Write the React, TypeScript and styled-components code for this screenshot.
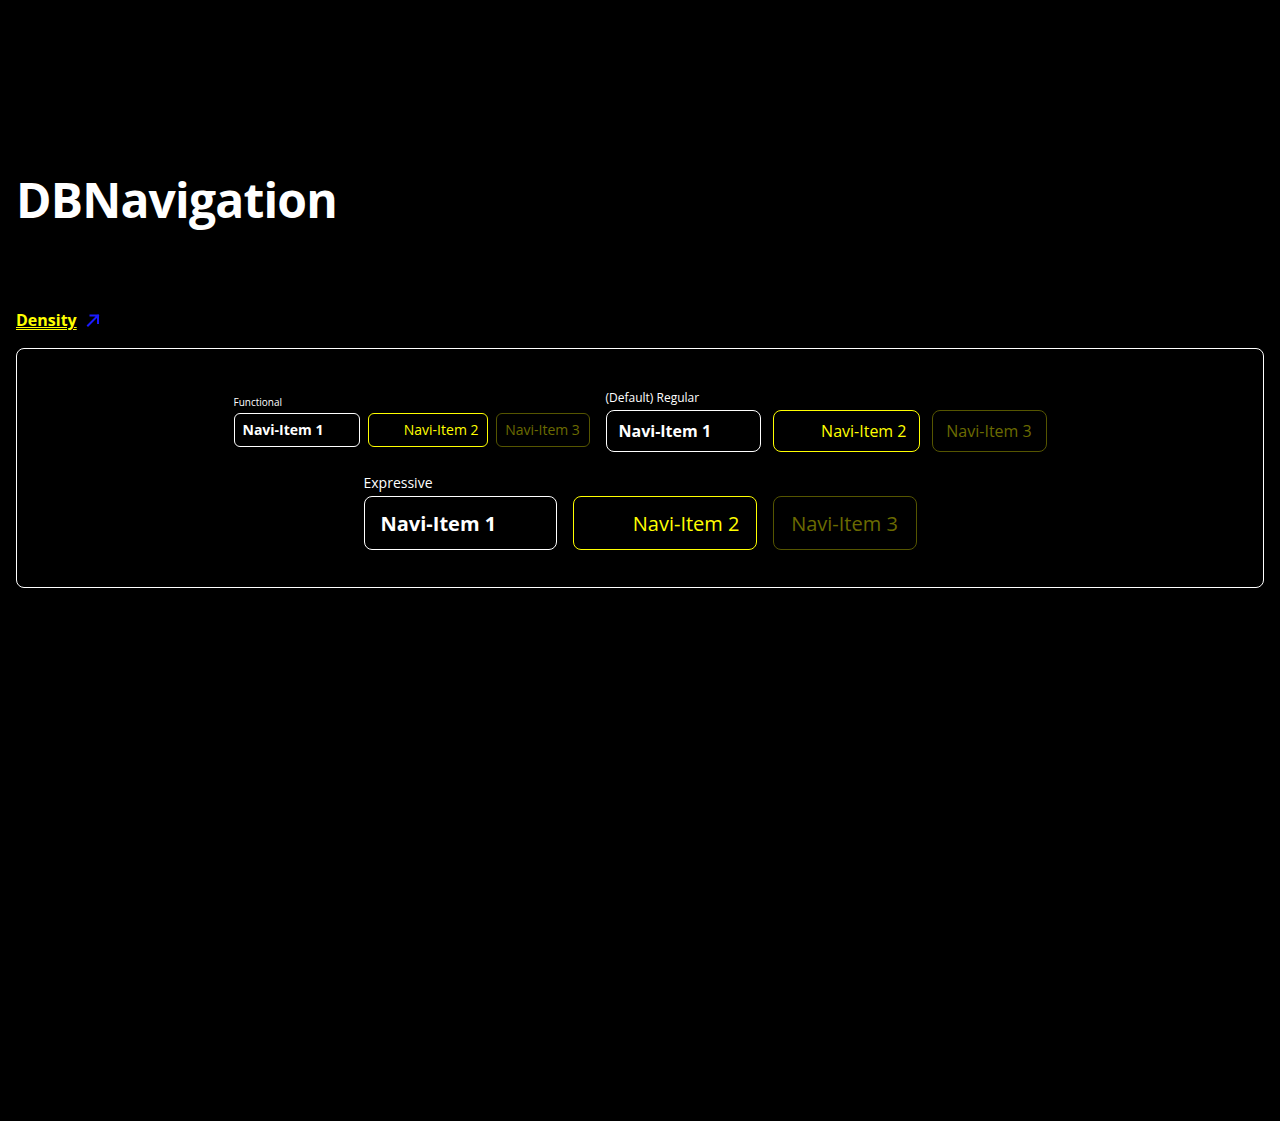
import React from "react";
import styled, { createGlobalStyle } from "styled-components";

type Density = "functional" | "regular" | "expressive";
type Tone = "active" | "current" | "muted";

const GlobalStyle = createGlobalStyle`
  html, body {
    margin: 0;
    padding: 0;
    background: #000;
    color: #fff;
    font-family: "Open Sans", "Noto Sans", sans-serif;
  }
`;

const sizes = {
  functional: { label: 10, font: 14, height: 34, pad: 8, gap: 8, radius: 6 },
  regular: { label: 12, font: 16, height: 42, pad: 12, gap: 12, radius: 8 },
  expressive: { label: 14, font: 20, height: 54, pad: 16, gap: 16, radius: 8 },
};

const groups: {
  density: Density;
  label: string;
  widths: number[];
}[] = [
  { density: "functional", label: "Functional", widths: [126, 120, 94] },
  { density: "regular", label: "(Default) Regular", widths: [155, 147, 115] },
  { density: "expressive", label: "Expressive", widths: [193, 184, 144] },
];

const tones: Tone[] = ["active", "current", "muted"];

const ExternalArrow = () => (
  <svg width="14" height="14" viewBox="0 0 14 14" fill="none">
    <path
      d="M2 12.5 L12 2.5 M4.5 2.5 H12 V10"
      stroke="#1a1aff"
      strokeWidth="2"
      strokeLinecap="square"
    />
  </svg>
);

export default function App() {
  return (
    <>
      <GlobalStyle />
      <Page>
        <Title>DBNavigation</Title>
        <DensityLink href="#density">
          <span>Density</span>
          <ExternalArrow />
        </DensityLink>
        <Showcase>
          {groups.map((g) => (
            <Group key={g.density}>
              <GroupLabel $density={g.density}>{g.label}</GroupLabel>
              <ItemRow $density={g.density}>
                {g.widths.map((w, i) => (
                  <NavItem
                    key={i}
                    $density={g.density}
                    $tone={tones[i]}
                    style={{ width: w }}
                  >
                    Navi-Item {i + 1}
                  </NavItem>
                ))}
              </ItemRow>
            </Group>
          ))}
        </Showcase>
      </Page>
    </>
  );
}

const Page = styled.div`
  padding: 160px 16px 40px;
`;

const Title = styled.h1`
  margin: 0;
  font-size: 48px;
  font-weight: 700;
  line-height: 80px;
  letter-spacing: -0.8px;
`;

const DensityLink = styled.a`
  display: inline-flex;
  align-items: center;
  gap: 9px;
  margin-top: 68px;
  color: #ffff00;
  font-size: 16px;
  font-weight: 700;
  line-height: 24px;

  span {
    text-decoration: underline;
    text-underline-offset: 3px;
  }
`;

const Showcase = styled.div`
  margin-top: 16px;
  border: 1px solid #ffffff;
  border-radius: 8px;
  padding: 40px 32px 37px;
  display: flex;
  flex-wrap: wrap;
  justify-content: center;
  align-items: center;
  column-gap: 16px;
  row-gap: 20px;
`;

const Group = styled.div`
  display: flex;
  flex-direction: column;
  gap: 3px;
`;

const GroupLabel = styled.div<{ $density: Density }>`
  font-size: ${(p) => sizes[p.$density].label}px;
  line-height: 1.5;
  color: #fff;
`;

const ItemRow = styled.div<{ $density: Density }>`
  display: flex;
  gap: ${(p) => sizes[p.$density].gap}px;
`;

const NavItem = styled.div<{ $density: Density; $tone: Tone }>`
  box-sizing: border-box;
  display: flex;
  align-items: center;
  justify-content: ${(p) =>
    p.$tone === "active" ? "flex-start" : p.$tone === "current" ? "flex-end" : "center"};
  height: ${(p) => sizes[p.$density].height}px;
  padding: 0 ${(p) => sizes[p.$density].pad}px;
  border: 1px solid
    ${(p) => (p.$tone === "active" ? "#fff" : p.$tone === "current" ? "#ffff00" : "#555500")};
  border-radius: ${(p) => sizes[p.$density].radius}px;
  font-size: ${(p) => sizes[p.$density].font}px;
  font-weight: ${(p) => (p.$tone === "active" ? 700 : 400)};
  color: ${(p) => (p.$tone === "active" ? "#fff" : p.$tone === "current" ? "#ffff00" : "#6b6b00")};
  white-space: nowrap;
`;
